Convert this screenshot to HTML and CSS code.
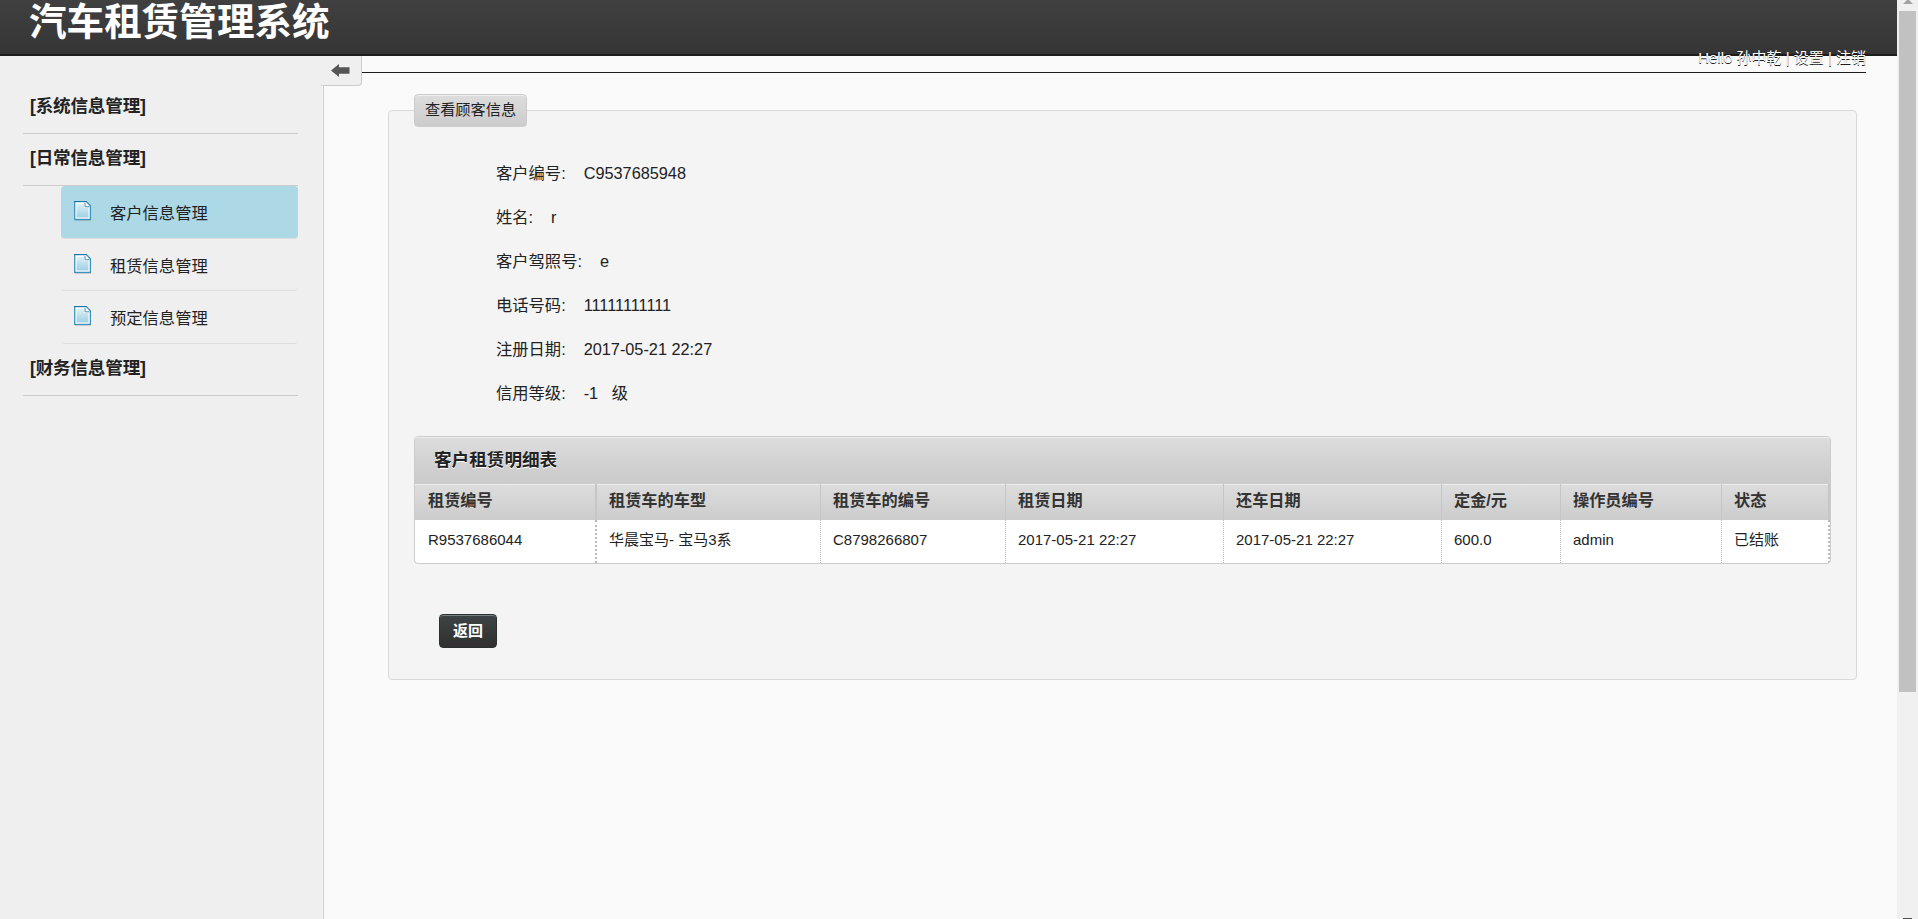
FILE: index.html
```html
<!DOCTYPE html>
<html lang="zh-CN">
<head>
    <meta charset="UTF-8">
    <title>汽车租赁管理系统</title>
    <link rel="stylesheet" href="styles.css">
</head>
<body>
    <svg class="defs" width="0" height="0">
        <defs>
            <linearGradient id="paper" x1="0" y1="0" x2="0" y2="1">
                <stop offset="0" stop-color="#dceff6"/>
                <stop offset="1" stop-color="#9fd0e4"/>
            </linearGradient>
            <symbol id="doc" viewBox="0 0 18 20">
                <path d="M1 19.5H17" stroke="#000" stroke-opacity=".15"/>
                <path d="M.7.6H12.3L16.4 4.7V18.4H.7Z" fill="#fff" stroke="#4191bd" stroke-width="1.3"/>
                <path d="M0 .5H12.5" stroke="#1d74a8"/>
                <path d="M2.5 3H10V7H14.5V16.5H2.5Z" fill="url(#paper)"/>
                <path d="M11 2V5.8H15.5" fill="#fff" stroke="#4191bd"/>
            </symbol>
        </defs>
    </svg>
    <div class="page">
        <div class="main">
            <div class="header">
                <h1>汽车租赁管理系统</h1>
            </div>
            <div class="body">
                <div class="sidebar">
                    <ul class="nav">
                        <li class="nav-title">[系统信息管理]</li>
                        <li class="nav-title">[日常信息管理]</li>
                        <li class="nav-item active"><svg class="icon"><use href="#doc"/></svg>客户信息管理</li>
                        <li class="nav-item short"><svg class="icon"><use href="#doc"/></svg>租赁信息管理</li>
                        <li class="nav-item"><svg class="icon"><use href="#doc"/></svg>预定信息管理</li>
                        <li class="nav-title">[财务信息管理]</li>
                    </ul>
                    <div class="toggle">
                        <svg width="19" height="13" viewBox="0 0 19 13"><path d="M0 6.5L8 0V3.2H18.5V9.8H8V13Z" fill="#555"/></svg>
                    </div>
                </div>
                <div class="content">
                    <div class="user">Hello 孙中乾 | <a>设置</a> | <a>注销</a></div>
                    <div class="panel">
                        <div class="legend">查看顾客信息</div>
                        <div class="info">
                            <p><label>客户编号:</label>C9537685948</p>
                            <p><label>姓名:</label>r</p>
                            <p><label>客户驾照号:</label>e</p>
                            <p><label>电话号码:</label>11111111111</p>
                            <p><label>注册日期:</label>2017-05-21 22:27</p>
                            <p><label>信用等级:</label>-1 &nbsp; 级</p>
                        </div>
                        <div class="box">
                            <h2>客户租赁明细表</h2>
                            <table>
                                <colgroup>
                                    <col class="c1"><col class="c2"><col class="c3"><col class="c4">
                                    <col class="c5"><col class="c6"><col class="c7"><col class="c8">
                                </colgroup>
                                <tr>
                                    <th>租赁编号</th>
                                    <th>租赁车的车型</th>
                                    <th>租赁车的编号</th>
                                    <th>租赁日期</th>
                                    <th>还车日期</th>
                                    <th>定金/元</th>
                                    <th>操作员编号</th>
                                    <th>状态</th>
                                </tr>
                                <tr>
                                    <td>R9537686044</td>
                                    <td>华晨宝马- 宝马3系</td>
                                    <td>C8798266807</td>
                                    <td>2017-05-21 22:27</td>
                                    <td>2017-05-21 22:27</td>
                                    <td>600.0</td>
                                    <td>admin</td>
                                    <td>已结账</td>
                                </tr>
                            </table>
                        </div>
                        <button class="btn">返回</button>
                    </div>
                </div>
            </div>
        </div>
        <div class="scrollbar">
            <svg class="up" width="10" height="4" viewBox="0 0 10 4"><path d="M0 4L4 0H6L10 4Z" fill="#a3a3a3"/></svg>
            <div class="thumb"></div>
            <div class="down"></div>
        </div>
    </div>
</body>
</html>
```
FILE: styles.css
```css
* {
    margin: 0;
    padding: 0;
    box-sizing: border-box;
}

body {
    height: 919px;
    overflow: hidden;
    background: #fafafa;
    color: #222;
    font-family: "Liberation Sans", "Noto Sans CJK SC", sans-serif;
    font-size: 16px;
}

.defs {
    position: absolute;
}

.page {
    display: flex;
    height: 919px;
}

.main {
    flex: 1;
    display: flex;
    flex-direction: column;
}

.header {
    height: 56px;
    padding-left: 29px;
    background: linear-gradient(#404040, #353535);
    border-bottom: 2px solid #1c1c1c;
}

.header h1 {
    color: #fff;
    font-size: 37.6px;
    line-height: 45px;
}

.body {
    flex: 1;
    display: flex;
}

.sidebar {
    position: relative;
    z-index: 1;
    width: 324px;
    padding: 26px 25px 0 23px;
    background: #efefef;
    border-right: 1px solid #ccc;
    box-shadow: inset -1px 0 0 #f8f8f8;
}

.nav {
    list-style: none;
}

.nav-title {
    height: 52px;
    padding-left: 7px;
    border-bottom: 1px solid #ccc;
    font-size: 17.6px;
    font-weight: bold;
    line-height: 49px;
    letter-spacing: -0.2px;
}

.nav-item {
    display: flex;
    height: 53px;
    margin-left: 38px;
    padding: 14px 0 0 13px;
    border-bottom: 1px solid #ddd;
    border-radius: 4px;
    font-size: 16.3px;
    line-height: 26px;
}

.nav-item.short {
    height: 52px;
}

.nav-item.active {
    background: #add8e6;
}

.icon {
    width: 18px;
    height: 20px;
    margin: 1px 18px 0 0;
}

.toggle {
    position: absolute;
    top: 0;
    left: 321px;
    width: 41px;
    height: 30px;
    padding: 8px 0 0 10px;
    background: #efefef;
    border: 1px solid #ccc;
    border-width: 0 1px 1px 0;
    border-radius: 0 0 4px 0;
}

.toggle svg {
    display: block;
}

.content {
    flex: 1;
    padding-right: 31px;
}

/* the text runs up over the header's lower border */
.user {
    position: relative;
    height: 17px;
    border-bottom: 1px solid #1c1c1c;
    color: #fff;
    font-size: 15px;
    line-height: 4px;
    text-align: right;
    text-shadow: 0 1px 0 #1c1c1c;
}

.panel {
    width: 1469px;
    height: 570px;
    margin: 37px 0 0 64px;
    padding: 0 25px;
    background: #f4f4f4;
    border: 1px solid #d9d9d9;
    border-radius: 4px;
}

.legend {
    width: 113px;
    height: 33px;
    margin-top: -17px;
    background: linear-gradient(#ddd, #ccc);
    border: 1px solid #ccc;
    border-radius: 4px;
    box-shadow: inset 0 1px 0 #eee;
    font-size: 15.2px;
    line-height: 30px;
    text-align: center;
}

.info {
    padding: 25px 0 0 82px;
    font-size: 16.3px;
}

.info p {
    height: 44px;
    line-height: 43px;
}

.info label {
    margin-right: 18px;
}

.box {
    width: 1417px;
    height: 128px;
    margin-top: 20px;
    overflow: hidden;
    background: #fff;
    border: 1px solid #ccc;
    border-radius: 4px;
}

.box h2 {
    height: 47px;
    padding-left: 19px;
    background: linear-gradient(#ddd, #ccc 85%);
    box-shadow: inset 0 1px 0 #eee;
    font-size: 17.6px;
    line-height: 46px;
    text-shadow: 0 1px 0 #fff;
}

table {
    width: 1415px;
    border-collapse: separate;
    border-spacing: 0;
    table-layout: fixed;
}

.c1 { width: 182px; }
.c2 { width: 224px; }
.c3 { width: 185px; }
.c4 { width: 218px; }
.c5 { width: 218px; }
.c6 { width: 119px; }
.c7 { width: 161px; }
.c8 { width: 108px; }

th {
    height: 36px;
    padding: 0 0 5px 12px;
    background: linear-gradient(#ddd, #ccc);
    border-right: 1px solid #c6c6c6;
    box-shadow: inset 0 1px 0 #eee;
    color: #333;
    font-size: 16.2px;
    line-height: 24px;
    text-align: left;
}

td {
    height: 43px;
    padding: 0 0 4px 12px;
    border-right: 1px dotted #bbb;
    font-size: 15px;
    line-height: 24px;
}

th:first-child,
td:first-child {
    padding-left: 13px;
    border-right-width: 2px;
}

th:last-child,
td:last-child {
    border-right-width: 2px;
}

.btn {
    display: block;
    width: 58px;
    height: 34px;
    margin: 50px 0 0 25px;
    background: linear-gradient(#3d4445, #303030);
    border: 1px solid #2b2e2f;
    border-radius: 4px;
    box-shadow: inset 0 1px 0 #7b8081;
    color: #fff;
    font-family: inherit;
    font-size: 15px;
    font-weight: bold;
    line-height: 30px;
}

.scrollbar {
    display: flex;
    flex-direction: column;
    align-items: center;
    width: 21px;
    background: #f0f0f0;
}

.scrollbar .up {
    margin-bottom: 7px;
}

.thumb {
    width: 17px;
    height: 681px;
    background: #c1c1c1;
}

.down {
    width: 9px;
    height: 1px;
    margin-top: auto;
    background: #505050;
}
```
